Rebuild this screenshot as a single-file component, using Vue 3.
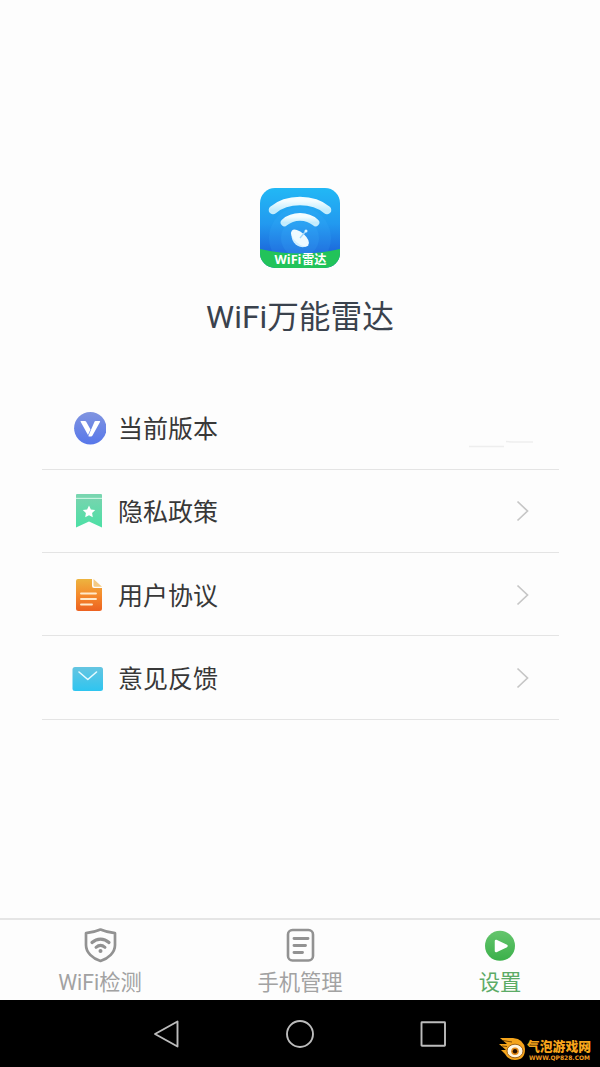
<template>
  <div class="page">
    <main class="content">
      <header class="app-info">
        <svg class="app-logo" viewBox="0 0 80 80">
          <defs>
            <linearGradient id="logoBg" x1="0" y1="0" x2="0" y2="1">
              <stop offset="0" stop-color="#22b8f5" />
              <stop offset="0.45" stop-color="#2299ef" />
              <stop offset="0.8" stop-color="#1c69dc" />
            </linearGradient>
            <linearGradient id="wave" x1="0" y1="0" x2="0" y2="1">
              <stop offset="0" stop-color="#f4fdff" />
              <stop offset="1" stop-color="#c3ecfd" />
            </linearGradient>
            <clipPath id="logoClip"><rect width="80" height="80" rx="15" /></clipPath>
          </defs>
          <g clip-path="url(#logoClip)">
            <rect width="80" height="80" fill="url(#logoBg)" />
            <circle cx="40" cy="50" r="31" fill="#45baff" opacity="0.14" />
            <circle cx="40" cy="50" r="19" fill="#45baff" opacity="0.16" />
            <path d="M13 22C27 10 53 10 67 22" fill="none" stroke="url(#wave)" stroke-width="8.600" stroke-linecap="round" />
            <path d="M24.500 34.500C33 27 47 27 55.500 34.500" fill="none" stroke="url(#wave)" stroke-width="7.600" stroke-linecap="round" />
            <path d="M32 43C29 54 39 63 48.500 57.500Z" fill="#cfeeff" />
            <ellipse cx="40" cy="50" rx="11" ry="5.500" transform="rotate(42 40 50)" fill="#eefaff" />
            <path d="M40 50L45.500 43.500" stroke="#9fd6fb" stroke-width="1.300" />
            <circle cx="46" cy="43" r="1.500" fill="#d9f3ff" />
            <path d="M0 61Q40 70 80 61V80H0Z" fill="#22c35a" />
            <text x="14.500" y="75.500" textLength="27" lengthAdjust="spacingAndGlyphs" class="logo-text">WiFi</text>
            <text x="42" y="75.500" textLength="24.500" lengthAdjust="spacingAndGlyphs" class="logo-text">雷达</text>
          </g>
        </svg>
        <h1 class="app-name">WiFi万能雷达</h1>
      </header>

      <ul class="menu">
        <li v-for="item in menuList" :key="item.key" class="menu-item">
          <svg class="menu-icon" viewBox="0 0 36 36">
            <g v-if="item.key === 'version'">
              <linearGradient id="verBg" x1="0" y1="0" x2="0" y2="1">
                <stop offset="0" stop-color="#8094e0" />
                <stop offset="1" stop-color="#5777ea" />
              </linearGradient>
              <circle cx="20.300" cy="18.300" r="16.200" fill="url(#verBg)" />
              <path d="M10.500 11.500Q10.500 11 11 11H15Q15.700 11 16 11.500L20.500 19.500L18 25Z" fill="#fff" />
              <path d="M25.500 11H29.500Q30.500 11 30 12L22.500 25.500Q22 26.500 21 26.500H19Q18 26.500 18.500 25.500L24.500 11.700Q24.800 11 25.500 11Z" fill="#fff" />
            </g>
            <g v-else-if="item.key === 'privacy'">
              <linearGradient id="privacyBg" x1="0" y1="0" x2="0" y2="1">
                <stop offset="0" stop-color="#75d5ae" />
                <stop offset="1" stop-color="#4be0a5" />
              </linearGradient>
              <path d="M7 1H31Q32 1 32 2V5H6V2Q6 1 7 1Z" fill="#78d6b0" />
              <path d="M6 6H32V34.500L19 28.500L6 34.500Z" fill="url(#privacyBg)" />
              <path d="M6 5.300H32" stroke="#b9f2da" stroke-width="1" />
              <path d="M19 12.500L20.900 16.400L25.200 17L22.100 20L22.800 24.300L19 22.300L15.200 24.300L15.900 20L12.800 17L17.100 16.400Z" fill="#fff" />
            </g>
            <g v-else-if="item.key === 'agreement'">
              <linearGradient id="agreeBg" x1="0" y1="0" x2="0" y2="1">
                <stop offset="0" stop-color="#edb43f" />
                <stop offset="0.5" stop-color="#f58b2c" />
                <stop offset="1" stop-color="#ec6120" />
              </linearGradient>
              <path d="M8 2H22V9Q22 11 24 11H32V31.500Q32 34 29.500 34H8.500Q6 34 6 31.500V4Q6 2 8 2Z" fill="url(#agreeBg)" />
              <path d="M23.500 2L32 9.700H25Q23.500 9.700 23.500 8.200Z" fill="#f4ca83" />
              <path d="M11 16.500H26M11 22H26M11 27.500H22" stroke="#ffe9c9" stroke-width="1.900" stroke-linecap="round" />
            </g>
            <g v-else>
              <linearGradient id="mailBg" x1="0" y1="0" x2="0" y2="1">
                <stop offset="0" stop-color="#65c5e1" />
                <stop offset="1" stop-color="#2ec5f0" />
              </linearGradient>
              <rect x="2.500" y="7" width="30.500" height="24" rx="2.500" fill="url(#mailBg)" />
              <path d="M9 12L17.800 19.500L26.500 12" fill="none" stroke="#e6faff" stroke-width="1.600" stroke-linecap="round" stroke-linejoin="round" />
            </g>
          </svg>
          <span class="menu-label">{{ item.label }}</span>
          <svg v-if="item.key === 'version'" class="version-mark" viewBox="0 0 64 8">
            <path d="M0 6.500H35M37 1.500L44 2H64" fill="none" stroke="#eeeeee" stroke-width="1.500" />
          </svg>
          <svg v-else class="arrow" viewBox="0 0 14 22">
            <path d="M1.500 1.500L11.500 11L1.500 20.500" fill="none" stroke="#c6c6c6" stroke-width="1.700" />
          </svg>
        </li>
      </ul>
    </main>

    <nav class="tabs">
      <button
        v-for="tab in tabs"
        :key="tab.key"
        class="tab"
        :class="{ active: current === tab.key }"
        @click="current = tab.key"
      >
        <svg class="tab-icon" viewBox="0 0 36 36">
          <g v-if="tab.key === 'wifi'" fill="none" stroke="#929292" stroke-linecap="round">
            <path d="M18.500 2.500C23 4.500 27.500 5.500 33 6.200V18C33 25.500 26.500 31.500 18.500 34C10.500 31.500 4 25.500 4 18V6.200C9.500 5.500 14 4.500 18.500 2.500Z" stroke-width="2.700" stroke-linejoin="round" />
            <path d="M10 15.500C15 11 22 11 27 15.500" stroke-width="3.200" />
            <path d="M14 20.300C17 17.700 20 17.700 23 20.300" stroke-width="3" />
            <circle cx="18.500" cy="24" r="2" fill="#929292" stroke="none" />
          </g>
          <g v-else-if="tab.key === 'phone'" fill="none" stroke="#929292">
            <rect x="6" y="3" width="25" height="30.500" rx="4.500" stroke-width="2.600" />
            <path d="M12 11.500H26M12 18.500H23.500M12 25.500H20.500" stroke-width="2.900" stroke-linecap="round" />
          </g>
          <g v-else>
            <linearGradient id="setBg" x1="0" y1="0" x2="0" y2="1">
              <stop offset="0" stop-color="#65c56d" />
              <stop offset="1" stop-color="#3bb04a" />
            </linearGradient>
            <circle cx="18" cy="18.800" r="15" fill="url(#setBg)" />
            <path d="M14 14L24.500 19L14 24Z" fill="#fff" stroke="#fff" stroke-width="2.500" stroke-linejoin="round" />
          </g>
        </svg>
        <span>{{ tab.label }}</span>
      </button>
    </nav>

    <footer class="system-bar">
      <svg class="sys-icon" viewBox="0 0 30 30">
        <path d="M25.500 2.500V27.500L3 15Z" />
      </svg>
      <svg class="sys-icon" viewBox="0 0 30 30">
        <circle cx="15" cy="15" r="13" />
      </svg>
      <svg class="sys-icon" viewBox="0 0 30 30">
        <rect x="3.500" y="3.200" width="23.500" height="23.500" rx="0.500" />
      </svg>
      <svg class="watermark" viewBox="0 0 100 34">
        <path d="M2 7H15Q26 8 27 18Q27 29 17 29Q10 29 7 23L3 19H8L1 13H9Z" fill="#f5a51c" />
        <path d="M5 9.500L14 11M4 15L9 15.500" stroke="#5a3000" stroke-width="0.800" />
        <ellipse cx="17" cy="20" rx="8" ry="6.800" fill="#fff6df" stroke="#8a4b05" stroke-width="0.800" />
        <circle cx="17" cy="20.300" r="3.800" fill="#e58a16" />
        <circle cx="17" cy="20.300" r="2.200" fill="#291300" />
        <text x="29" y="20" textLength="64" lengthAdjust="spacingAndGlyphs" class="mark-name">气泡游戏网</text>
        <text x="31" y="28.500" textLength="61" lengthAdjust="spacingAndGlyphs" class="mark-url">WWW.QP828.COM</text>
      </svg>
    </footer>
  </div>
</template>

<script setup>
import { ref } from "vue";

const menuList = [
  { key: "version", label: "当前版本" },
  { key: "privacy", label: "隐私政策" },
  { key: "agreement", label: "用户协议" },
  { key: "feedback", label: "意见反馈" },
];

const tabs = [
  { key: "wifi", label: "WiFi检测" },
  { key: "phone", label: "手机管理" },
  { key: "setting", label: "设置" },
];

const current = ref("setting");
</script>

<style>
body {
  margin: 0;
  background: #fdfdfd;
}
</style>

<style scoped>
.page {
  display: flex;
  flex-direction: column;
  height: 1067px;
  background: #fdfdfd;
  font-family: Roboto, "Noto Sans CJK SC", sans-serif;
  overflow: hidden;
}

.content {
  flex: 1;
}

.app-info {
  display: flex;
  flex-direction: column;
  align-items: center;
  box-sizing: border-box;
  height: 386.500px;
  padding-top: 188px;
}

.app-logo {
  width: 80px;
  height: 80px;
}

.logo-text {
  fill: #fff;
  font-family: "Open Sans", "Noto Sans CJK SC", sans-serif;
  font-size: 12px;
  font-weight: 700;
}

.app-name {
  margin: 25.500px 0 0;
  font-size: 31.700px;
  font-weight: 400;
  line-height: 48px;
  color: #3a424d;
}

.menu {
  margin: 0;
  padding: 0 41px 0 42px;
  list-style: none;
}

.menu-item {
  display: flex;
  align-items: center;
  box-sizing: border-box;
  height: 83.300px;
  padding: 1px 26px 0 28px;
  border-bottom: 1px solid #e4e4e4;
}

.menu-icon {
  width: 36px;
  height: 36px;
}

.menu-label {
  flex: 1;
  margin-left: 12px;
  padding-top: 4px;
  font-size: 25px;
  line-height: 36px;
  color: #383838;
}

.arrow {
  width: 14px;
  height: 22px;
  margin-right: 3px;
}

.version-mark {
  width: 64px;
  height: 8px;
  margin-top: 32px;
}

/* bottom tabs */
.tabs {
  display: flex;
  box-sizing: border-box;
  height: 82px;
  border-top: 2px solid #e5e5e5;
}

.tab {
  flex: 1;
  display: flex;
  flex-direction: column;
  align-items: center;
  gap: 3.500px;
  padding: 7px 0 0;
  border: 0;
  background: none;
  font-family: inherit;
  font-size: 21.300px;
  line-height: 32px;
  color: #a2a2a2;
}

.tab.active {
  color: #5cab66;
}

.tab-icon {
  width: 36px;
  height: 36px;
}

/* android navigation */
.system-bar {
  position: relative;
  display: flex;
  align-items: center;
  justify-content: center;
  gap: 103px;
  height: 67px;
  background: #000;
}

.sys-icon {
  width: 30px;
  height: 30px;
  fill: none;
  stroke: #bcbcbc;
  stroke-width: 1.900;
  stroke-linejoin: round;
}

.watermark {
  position: absolute;
  right: 2px;
  bottom: 2px;
  width: 100px;
  height: 34px;
}

.mark-name {
  fill: #f8a51b;
  font-size: 13px;
  font-weight: 900;
}

.mark-url {
  fill: #f09a20;
  font-family: "DejaVu Sans", sans-serif;
  font-size: 6.200px;
  font-weight: 700;
}
</style>
